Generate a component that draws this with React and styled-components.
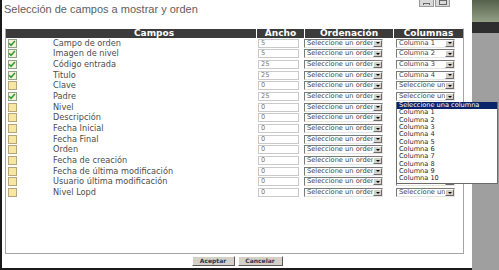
import React from "react";
import styled, { createGlobalStyle } from "styled-components";

const GlobalStyle = createGlobalStyle`
  html, body { margin: 0; padding: 0; background: #9e9e9e; }
  #root { width: 499px; height: 270px; overflow: hidden; }
`;

const Frame = styled.div`
  display: flex;
  width: 499px;
  height: 270px;
  font-family: "DejaVu Sans", Verdana, sans-serif;
  background-color: #9e9e9e;
`;

const Main = styled.div`
  flex: 0 0 472px;
  width: 472px;
  height: 270px;
  box-sizing: border-box;
  border-left: 2px solid #1a1a1a;
  border-bottom: 2px solid #1a1a1a;
  display: flex;
  flex-direction: column;
  background-color: #ffffff;
`;

const SideStrip = styled.div`
  flex: 0 0 27px;
  width: 27px;
  height: 270px;
  display: flex;
  flex-direction: column;
  background-color: #9f9f9f;
`;

const StripCap = styled.div`
  height: 22px;
  background-color: #7f8c74;
  background-image: linear-gradient(180deg, #56604c, #93a086);
`;

const StripBand = styled.div`
  height: 11px;
  background-color: #2e2e2e;
`;

const StripBody = styled.div`
  flex: 1;
  background-color: #9f9f9f;
`;

const TitleBar = styled.div`
  height: 28px;
  display: flex;
  align-items: flex-start;
  overflow: hidden;
`;

const Title = styled.div`
  font-family: "Liberation Sans", Arial, sans-serif;
  font-size: 11px;
  line-height: 11px;
  color: #5e5e5e;
  margin: 4px 0 0 2px;
`;

const WinButtons = styled.div`
  display: flex;
  gap: 1px;
  margin: 0 22px 0 auto;
`;

const WinButton = styled.div`
  width: 15px;
  height: 7px;
  box-sizing: border-box;
  background: #d9d9d9;
  border: 1px solid #9a9a9a;
  border-top: 0;
  display: flex;
  align-items: flex-end;
  justify-content: center;
  padding-bottom: 1px;
`;

const WinGlyph = styled.div`
  width: ${(p) => (p.$max ? "6px" : "5px")};
  height: ${(p) => (p.$max ? "3px" : "1px")};
  border: 1px solid #666;
  border-bottom-width: ${(p) => (p.$max ? "1px" : "0")};
`;

const Panel = styled.div`
  position: relative;
  margin-left: 3px;
  width: 459px;
  height: 226px;
  box-sizing: border-box;
  border: 1px solid #a4a4a4;
  border-top-color: #ffffff;
`;

const Grid = styled.div`
  display: grid;
  grid-template-columns: 46px 204px 48px 89px 70px;
  grid-template-rows: 9px;
  grid-auto-rows: 10.67px;
`;

const HeadCell = styled.div`
  background: #3b3b3b;
  color: #ffffff;
  font-weight: bold;
  font-size: 9px;
  line-height: 9px;
  text-align: center;
  white-space: nowrap;
  border-left: ${(p) => (p.$sep ? "1px solid #ffffff" : "0")};
`;

const Cell = styled.div`
  display: flex;
  align-items: center;
  padding-left: ${(p) => p.$pl || 0}px;
`;

const Box = styled.div`
  width: 9px;
  height: 9px;
  box-sizing: border-box;
  border: 1px solid ${(p) => (p.$checked ? "#8fa486" : "#b4a67a")};
  background: ${(p) => (p.$checked ? "#f4f1dc" : "#f8e7a2")};
  display: flex;
  align-items: center;
  justify-content: center;
`;

const FieldName = styled.span`
  font-size: 8.2px;
  line-height: 9px;
  color: #4d4d4d;
  white-space: nowrap;
`;

const TextInput = styled.div`
  width: 41px;
  height: 9px;
  box-sizing: border-box;
  border: 1px solid #c9c9c9;
  font-size: 6.6px;
  line-height: 7px;
  color: #7a7a7a;
  padding-left: 2px;
`;

const Select = styled.div`
  width: ${(p) => p.$w}px;
  height: 9px;
  box-sizing: border-box;
  border-top: 1px solid #7a7a7a;
  border-left: 1px solid #7a7a7a;
  border-right: 1px solid #e4e4e4;
  border-bottom: 1px solid #e4e4e4;
  background: #fff;
  display: flex;
  align-items: center;
`;

const SelectText = styled.span`
  flex: 1;
  min-width: 0;
  overflow: hidden;
  white-space: nowrap;
  font-size: 6.7px;
  line-height: 7px;
  color: #3f3f3f;
  padding-left: 2px;
`;

const Arrow = styled.div`
  width: 9px;
  height: 7px;
  box-sizing: border-box;
  background: #d4d0c8;
  border-top: 1px solid #fff;
  border-left: 1px solid #fff;
  border-right: 1px solid #6a6a6a;
  border-bottom: 1px solid #6a6a6a;
  display: flex;
  align-items: center;
  justify-content: center;
  flex: none;
`;

const ArrowTri = styled.div`
  width: 0;
  height: 0;
  border-left: 2px solid transparent;
  border-right: 2px solid transparent;
  border-top: 2px solid #000;
`;

const DropList = styled.div`
  position: absolute;
  top: 73px;
  left: 390px;
  width: 100px;
  background: #ffffff;
  border: 1px solid #6b6b6b;
  border-top: 0;
`;

const DropItem = styled.div`
  height: 7.35px;
  font-size: 6.6px;
  line-height: 7.35px;
  padding-left: 2px;
  white-space: nowrap;
  color: ${(p) => (p.$active ? "#ffffff" : "#2a2a2a")};
  background: ${(p) => (p.$active ? "#0a246a" : "transparent")};
`;

const Footer = styled.div`
  height: 14px;
  display: flex;
  justify-content: center;
  align-items: flex-start;
  gap: 3px;
  padding-top: 2px;
  box-sizing: border-box;
`;

const Button = styled.div`
  width: ${(p) => p.$w}px;
  height: 10px;
  box-sizing: border-box;
  background: #d4d0c8;
  border-top: 1px solid #ffffff;
  border-left: 1px solid #ffffff;
  border-right: 1px solid #5a5a5a;
  border-bottom: 1px solid #5a5a5a;
  font-size: 6px;
  line-height: 8px;
  font-weight: bold;
  color: #2b3550;
  text-align: center;
`;

const rows = [
  { name: "Campo de orden", on: true, w: "5", col: "Columna 1" },
  { name: "Imagen de nivel", on: true, w: "5", col: "Columna 2" },
  { name: "Código entrada", on: true, w: "25", col: "Columna 3" },
  { name: "Titulo", on: true, w: "25", col: "Columna 4" },
  { name: "Clave", on: false, w: "0", col: "Seleccione una columna" },
  { name: "Padre", on: true, w: "25", col: "Seleccione una columna" },
  { name: "Nivel", on: false, w: "0", col: "Seleccione una columna" },
  { name: "Descripción", on: false, w: "0", col: "Seleccione una columna" },
  { name: "Fecha Inicial", on: false, w: "0", col: "Seleccione una columna" },
  { name: "Fecha Final", on: false, w: "0", col: "Seleccione una columna" },
  { name: "Orden", on: false, w: "0", col: "Seleccione una columna" },
  { name: "Fecha de creación", on: false, w: "0", col: "Seleccione una columna" },
  { name: "Fecha de última modificación", on: false, w: "0", col: "Seleccione una columna" },
  { name: "Usuario última modificación", on: false, w: "0", col: "Seleccione una columna" },
  { name: "Nivel Lopd", on: false, w: "0", col: "Seleccione una columna" },
];

const options = [
  "Seleccione una columna",
  "Columna 1",
  "Columna 2",
  "Columna 3",
  "Columna 4",
  "Columna 5",
  "Columna 6",
  "Columna 7",
  "Columna 8",
  "Columna 9",
  "Columna 10",
];

function Check({ on }) {
  return (
    <Box $checked={on}>
      {on && (
        <svg width="9" height="9" viewBox="0 0 9 9" style={{ marginLeft: -1 }}>
          <path d="M1.2 4.3 L3.4 6.6 L7.8 1.6" fill="none" stroke="#2e9d2b" strokeWidth="1.7" />
        </svg>
      )}
    </Box>
  );
}

function Dropdown({ w, text }) {
  return (
    <Select $w={w}>
      <SelectText>{text}</SelectText>
      <Arrow>
        <ArrowTri />
      </Arrow>
    </Select>
  );
}

export default function App() {
  return (
    <>
      <GlobalStyle />
      <Frame>
        <Main>
          <TitleBar>
            <Title>Selección de campos a mostrar y orden</Title>
            <WinButtons>
              <WinButton>
                <WinGlyph />
              </WinButton>
              <WinButton>
                <WinGlyph $max />
              </WinButton>
            </WinButtons>
          </TitleBar>
          <Panel>
            <Grid>
              <HeadCell />
              <HeadCell>Campos</HeadCell>
              <HeadCell $sep>Ancho</HeadCell>
              <HeadCell $sep>Ordenación</HeadCell>
              <HeadCell $sep>Columnas</HeadCell>
              {rows.map((r) => (
                <React.Fragment key={r.name}>
                  <Cell $pl={2}>
                    <Check on={r.on} />
                  </Cell>
                  <Cell $pl={1}>
                    <FieldName>{r.name}</FieldName>
                  </Cell>
                  <Cell $pl={2}>
                    <TextInput>{r.w}</TextInput>
                  </Cell>
                  <Cell>
                    <Dropdown w={79} text="Seleccione un orden" />
                  </Cell>
                  <Cell $pl={3}>
                    <Dropdown w={59} text={r.col} />
                  </Cell>
                </React.Fragment>
              ))}
            </Grid>
            <DropList>
              {options.map((o, i) => (
                <DropItem key={o} $active={i === 0}>
                  {o}
                </DropItem>
              ))}
            </DropList>
          </Panel>
          <Footer>
            <Button $w={43}>Aceptar</Button>
            <Button $w={45}>Cancelar</Button>
          </Footer>
        </Main>
        <SideStrip>
          <StripCap />
          <StripBand />
          <StripBody />
        </SideStrip>
      </Frame>
    </>
  );
}
